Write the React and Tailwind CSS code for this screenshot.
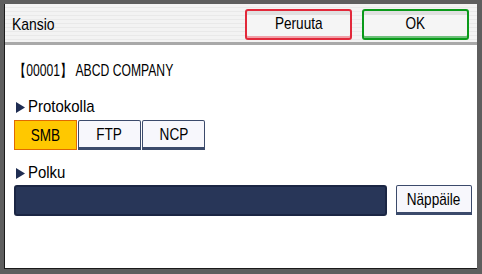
import React from 'react'

const font = "font-['Liberation_Sans',Arial,sans-serif]"

function Tri() {
    return (
        <svg width="9" height="11" viewBox="0 0 9 11" className="ml-[2px] mr-[3px]">
            <path d="M0 0 L9 5.5 L0 11 Z" fill="#1f2d52" />
        </svg>
    )
}

// narrow the text like the panel's bitmap font
function Narrow({children, left, wide}) {
    if (wide) return <span className="inline-block scale-x-[0.88] origin-left">{children}</span>
    return <span className={left ? "inline-block scale-x-[0.82] origin-left" : "inline-block scale-x-[0.8]"}>{children}</span>
}

function ProtoButton({label, active}) {
    return (
        <button
            className={active
                ? "w-[63px] h-[30px] border border-[#e06a00] bg-[#ffc800] text-[17px] leading-none text-black"
                : "w-[63px] h-[30px] border border-[#3b4a6b] border-b-[3px] bg-[#f7f7fc] text-[17px] leading-none text-black rounded-t-[2px]"}
        >
            <Narrow>{label}</Narrow>
        </button>
    )
}

export default function App() {
    return (
        <div className={`w-[482px] h-[274px] bg-[#5e5e5e] pt-[4px] pl-[4px] pr-[5px] pb-[5px] ${font}`}>
            <div className="w-full h-full bg-white border-l border-b border-[#1a1a1a] flex flex-col">
                <div className="h-[41px] flex items-center justify-between bg-[repeating-linear-gradient(180deg,#f3f3f3_0px,#f3f3f3_3px,#e9e9e9_3px,#e9e9e9_4px)] border-b-[3px] border-[#a9a9a9]">
                    <span className="pl-[7px] text-[17px] text-black pt-[3px]"><Narrow left>Kansio</Narrow></span>
                    <div className="flex gap-[10px] pr-[8px] pt-[2px]">
                        <button className="w-[107px] h-[31px] rounded-[3px] border-2 border-[#e2283a] bg-[linear-gradient(180deg,#e0e0e0_0px,#e0e0e0_4px,#f5f5f5_4px)] text-[17px] text-black shadow-[inset_0_-2px_0_#f0a0a8]">
                            <Narrow>Peruuta</Narrow>
                        </button>
                        <button className="w-[107px] h-[31px] rounded-[3px] border-2 border-[#0a9a1a] bg-[linear-gradient(180deg,#e0e0e0_0px,#e0e0e0_4px,#f5f5f5_4px)] text-[17px] text-black shadow-[inset_0_-2px_0_#6ec07a]">
                            <Narrow>OK</Narrow>
                        </button>
                    </div>
                </div>
                <div className="pl-[9px] pt-[16px] flex flex-col">
                    <div className="text-[16px] leading-[20px] text-black whitespace-nowrap">
                        <span className="inline-block scale-x-[0.76] origin-left">【00001】 ABCD COMPANY</span>
                    </div>
                    <div className="mt-[16px] flex items-center text-[17px] leading-[20px] text-black">
                        <Tri /><Narrow wide>Protokolla</Narrow>
                    </div>
                    <div className="mt-[3px] flex gap-[1px]">
                        <ProtoButton label="SMB" active />
                        <ProtoButton label="FTP" />
                        <ProtoButton label="NCP" />
                    </div>
                    <div className="mt-[13px] flex items-center text-[17px] leading-[20px] text-black">
                        <Tri /><Narrow wide>Polku</Narrow>
                    </div>
                    <div className="mt-[2px] flex items-start gap-[9px]">
                        <div className="w-[373px] h-[31px] rounded-[3px] bg-[#283658] border-2 border-[#1b2644]" />
                        <button className="w-[76px] h-[30px] border border-[#3b4a6b] border-b-[3px] bg-[#f7f7fc] text-[17px] leading-none text-black rounded-t-[2px]">
                            <Narrow>Näppäile</Narrow>
                        </button>
                    </div>
                </div>
            </div>
        </div>
    )
}
